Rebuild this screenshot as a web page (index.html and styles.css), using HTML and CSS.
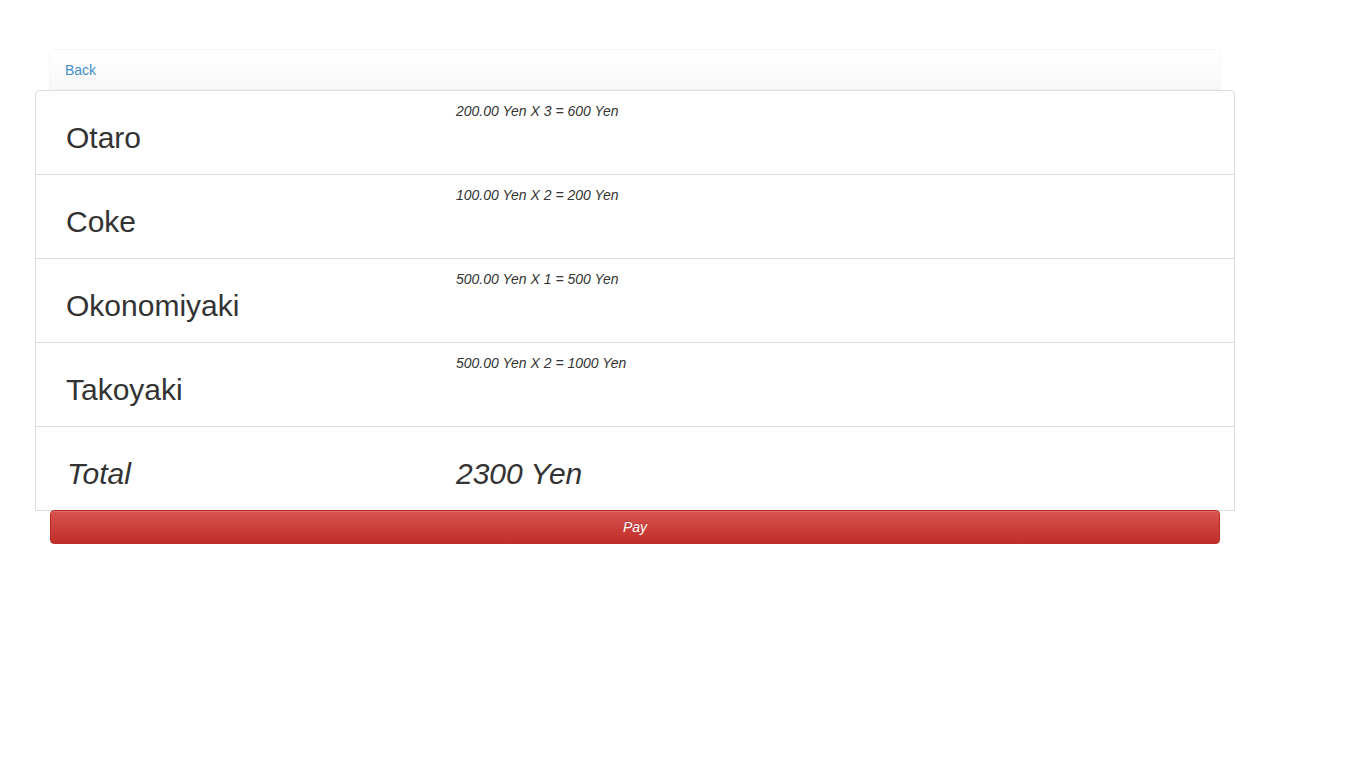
FILE: index.html
```html
<!DOCTYPE html>
<html>
<head>
<meta charset="utf-8">
<title>Order</title>
<link rel="stylesheet" href="styles.css">
</head>
<body>
<div class="page">
  <nav class="topbar"><a class="back" href="#">Back</a></nav>
  <div class="list">
    <div class="item">
      <div class="name"><h2>Otaro</h2></div>
      <div class="calc"><em>200.00 Yen X 3 = 600 Yen</em></div>
    </div>
    <div class="item">
      <div class="name"><h2>Coke</h2></div>
      <div class="calc"><em>100.00 Yen X 2 = 200 Yen</em></div>
    </div>
    <div class="item">
      <div class="name"><h2>Okonomiyaki</h2></div>
      <div class="calc"><em>500.00 Yen X 1 = 500 Yen</em></div>
    </div>
    <div class="item">
      <div class="name"><h2>Takoyaki</h2></div>
      <div class="calc"><em>500.00 Yen X 2 = 1000 Yen</em></div>
    </div>
    <div class="item total">
      <div class="name"><h2><em>Total</em></h2></div>
      <div class="calc"><h2><em>2300 Yen</em></h2></div>
    </div>
  </div>
  <button class="pay" type="button"><em>Pay</em></button>
</div>
</body>
</html>
```
FILE: styles.css
```css
html, body {
  margin: 0;
  padding: 0;
  background: #fff;
}
body {
  font-family: "Liberation Sans", Arial, sans-serif;
  font-size: 14px;
  line-height: 20px;
  color: #333;
}
.page {
  width: 1200px;
  padding: 49px 0 0 35px;
  display: flex;
  flex-direction: column;
}
.topbar {
  margin: 0 14px;
  height: 41px;
  box-sizing: border-box;
  border: 1px solid #f5f5f5;
  border-bottom-color: #f1f1f1;
  border-radius: 5px 5px 0 0;
  background: linear-gradient(to bottom, #ffffff 0%, #f8f8f8 100%);
  padding: 0 15px;
  display: flex;
  align-items: center;
}
.back {
  color: #428bca;
  text-decoration: none;
}
.list {
  border: 1px solid #ddd;
  border-radius: 4px 4px 0 0;
}
.item {
  display: grid;
  grid-template-columns: 405px 1fr;
  padding: 10px 15px;
  height: 83px;
  box-sizing: border-box;
}
.item + .item {
  border-top: 1px solid #ddd;
  height: 84px;
}
.name {
  padding-left: 15px;
}
h2 {
  margin: 20px 0 10px;
  font-size: 30px;
  line-height: 33px;
  font-weight: normal;
}
.total .name h2 {
  padding-left: 1px;
}
.calc em {
  font-style: italic;
}
.pay {
  margin: -1px 15px 0;
  height: 34px;
  padding: 6px 12px;
  font-family: "Liberation Sans", Arial, sans-serif;
  font-size: 14px;
  line-height: 20px;
  color: #fff;
  border: 1px solid #b92c28;
  border-radius: 4px;
  background: linear-gradient(to bottom, #d9534f 0%, #c12e2a 100%);
  text-shadow: 0 -1px 0 rgba(0, 0, 0, 0.2);
  box-shadow: inset 0 1px 0 rgba(255, 255, 255, 0.15), 0 1px 1px rgba(0, 0, 0, 0.075);
  cursor: pointer;
}
```
